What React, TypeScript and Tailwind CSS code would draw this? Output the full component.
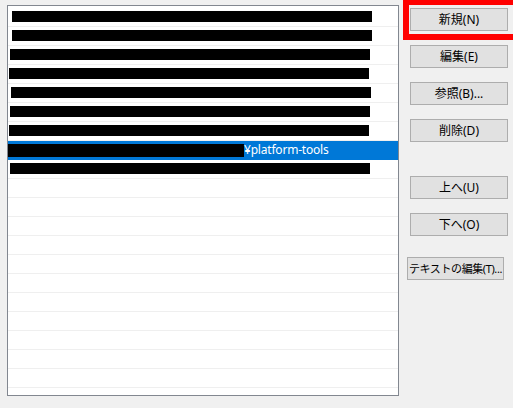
import React from "react"

// Dialogo "環境変数名の編集" de Windows: lista de rutas (tapadas) + columna de botones.

const ROWS = [
    { from: 12, to: 372 },
    { from: 12, to: 372 },
    { from: 10, to: 370 },
    { from: 9, to: 369 },
    { from: 11, to: 371 },
    { from: 10, to: 370 },
    { from: 9, to: 369 },
    { from: 8, to: 244, selected: true },
    { from: 10, to: 370 },
]

const EMPTY = 12

function Btn({ label, className = "" }: { label: string; className?: string }) {
    return (
        <button
            className={`flex h-[23px] items-center justify-center border border-[#adadad] bg-[#e1e1e1] leading-none text-black ${className}`}
        >
            {label}
        </button>
    )
}

export default function App() {
    return (
        <div
            className="relative flex h-[408px] w-[513px] overflow-hidden bg-[#f0f0f0]"
            style={{ fontFamily: '"Noto Sans", "Noto Sans CJK JP", sans-serif' }}
        >
            {/* lista */}
            <div className="ml-[7px] mt-[5px] h-[391px] w-[392px] overflow-hidden border border-[#828790] bg-white pt-[2px]">
                {ROWS.map((r, i) => (
                    <div
                        key={i}
                        className={`relative h-[19px] border-b ${r.selected ? "border-[#0078d7] bg-[#0078d7]" : "border-[#efefef]"}`}
                    >
                        {r.selected ? (
                            <div className="flex h-full items-center">
                                <div className="h-[13px] bg-black" style={{ width: r.to - 8 }} />
                                <span className="text-[12px] leading-none tracking-[-0.2px] text-white">¥platform-tools</span>
                            </div>
                        ) : (
                            <div
                                className="absolute top-[3px] h-[11px] bg-black"
                                style={{ left: r.from - 8, width: r.to - r.from }}
                            />
                        )}
                    </div>
                ))}
                {Array.from({ length: EMPTY }).map((_, i) => (
                    <div key={`e${i}`} className="h-[19px] border-b border-[#efefef]" />
                ))}
            </div>

            {/* botones */}
            <div className="ml-[11px] flex flex-col pt-[8px]">
                <Btn label="新規(N)" className="w-[98px] text-[12px]" />
                <Btn label="編集(E)" className="mt-[14px] w-[98px] text-[12px]" />
                <Btn label="参照(B)..." className="mt-[14px] w-[98px] text-[12px]" />
                <Btn label="削除(D)" className="mt-[14px] w-[98px] text-[12px]" />
                <Btn label="上へ(U)" className="mt-[34px] w-[98px] text-[12px]" />
                <Btn label="下へ(O)" className="mt-[14px] w-[98px] text-[12px]" />
                <Btn
                    label="テキストの編集(T)..."
                    className="-ml-[3px] mt-[21px] w-[97px] whitespace-nowrap text-[11px] tracking-[-0.4px]"
                />
            </div>

            {/* marco rojo de resaltado */}
            <div className="absolute left-[403px] top-[-1px] h-[41px] w-[116px] border-[6px] border-[#ff0000]" />
        </div>
    )
}
